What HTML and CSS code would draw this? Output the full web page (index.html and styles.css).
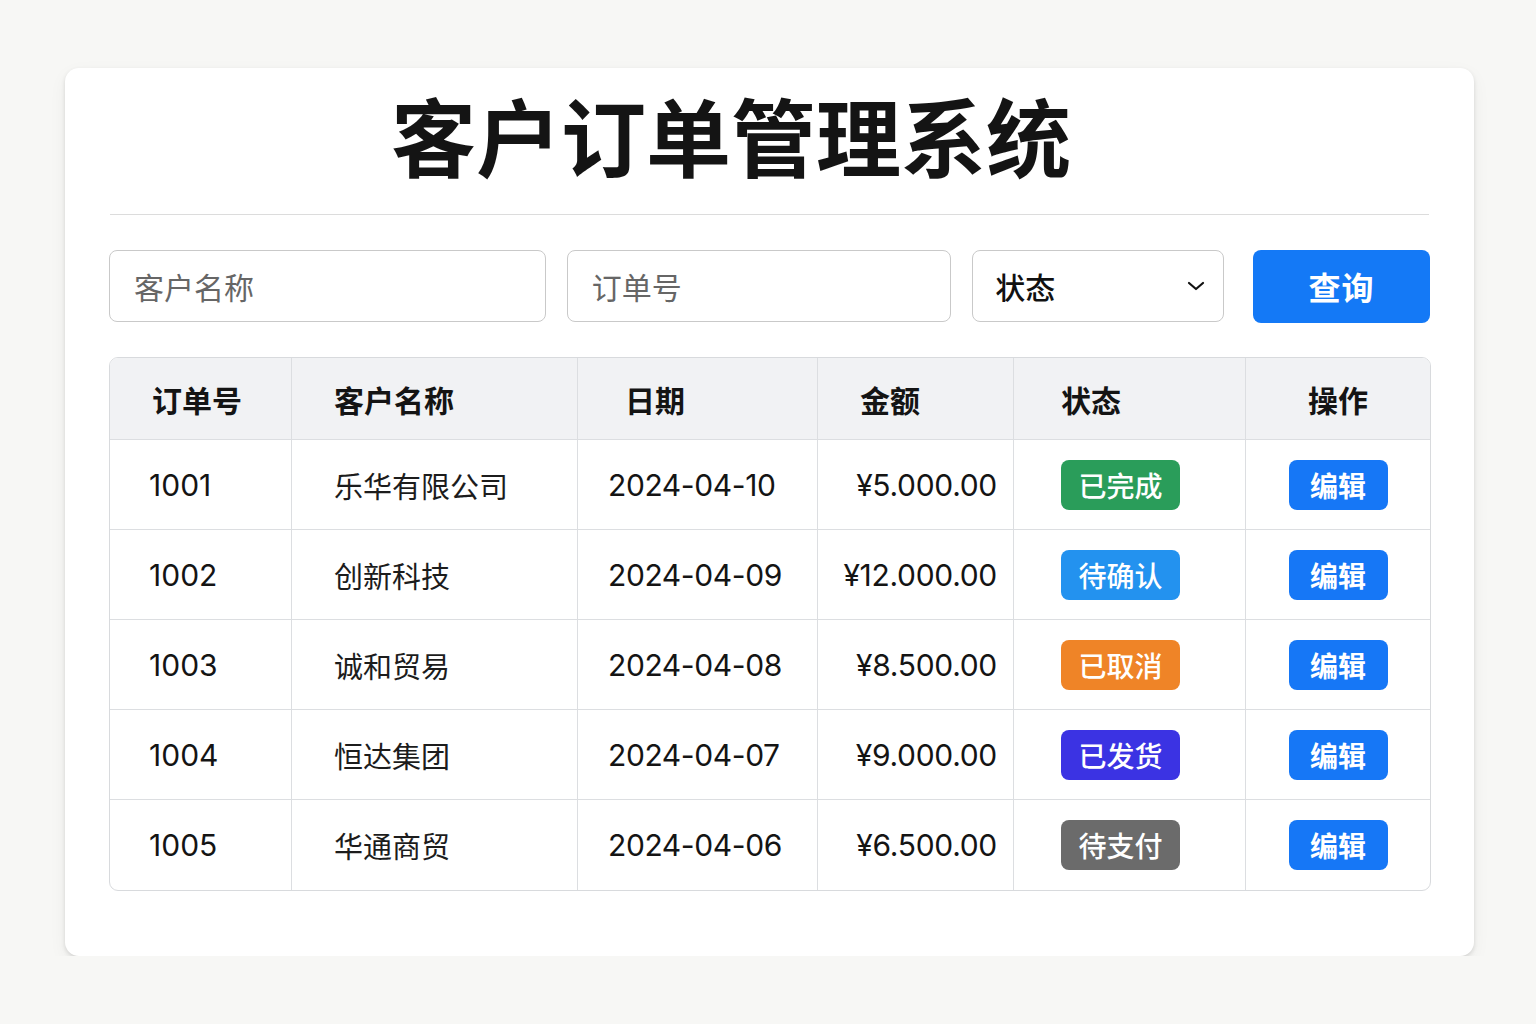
FILE: index.html
```html
<!DOCTYPE html>
<html lang="zh-CN">
<head>
<meta charset="utf-8">
<title>客户订单管理系统</title>
<link rel="stylesheet" href="styles.css">
</head>
<body>
<div class="card">
  <h1 class="title">客户订单管理系统</h1>
  <div class="divider"></div>
  <div class="filters">
    <div class="field field-name">客户名称</div>
    <div class="field field-order">订单号</div>
    <div class="field field-select">
      <span>状态</span>
      <svg class="chev" width="18" height="12" viewBox="0 0 18 12"><path d="M2 3 L9 9 L16 3" fill="none" stroke="#111" stroke-width="2.2" stroke-linecap="round" stroke-linejoin="round"/></svg>
    </div>
    <button class="btn-query">查询</button>
  </div>
  <table class="orders">
    <colgroup>
      <col style="width:182px"><col style="width:286px"><col style="width:240px"><col style="width:196px"><col style="width:232px"><col style="width:184px">
    </colgroup>
    <thead>
      <tr>
        <th class="c1">订单号</th><th class="c2">客户名称</th><th class="c3">日期</th><th class="c4">金额</th><th class="c5">状态</th><th class="c6">操作</th>
      </tr>
    </thead>
    <tbody>
      <tr><td class="c1">1001</td><td class="c2">乐华有限公司</td><td class="c3">2024-04-10</td><td class="c4">¥5.000.00</td><td class="c5"><span class="badge green">已完成</span></td><td class="c6"><span class="edit">编辑</span></td></tr>
      <tr><td class="c1">1002</td><td class="c2">创新科技</td><td class="c3">2024-04-09</td><td class="c4">¥12.000.00</td><td class="c5"><span class="badge blue">待确认</span></td><td class="c6"><span class="edit">编辑</span></td></tr>
      <tr><td class="c1">1003</td><td class="c2">诚和贸易</td><td class="c3">2024-04-08</td><td class="c4">¥8.500.00</td><td class="c5"><span class="badge orange">已取消</span></td><td class="c6"><span class="edit">编辑</span></td></tr>
      <tr><td class="c1">1004</td><td class="c2">恒达集团</td><td class="c3">2024-04-07</td><td class="c4">¥9.000.00</td><td class="c5"><span class="badge indigo">已发货</span></td><td class="c6"><span class="edit">编辑</span></td></tr>
      <tr><td class="c1">1005</td><td class="c2">华通商贸</td><td class="c3">2024-04-06</td><td class="c4">¥6.500.00</td><td class="c5"><span class="badge gray">待支付</span></td><td class="c6"><span class="edit">编辑</span></td></tr>
    </tbody>
  </table>
</div>
</body>
</html>
```
FILE: styles.css
```css
* { box-sizing: border-box; }
html, body { margin: 0; padding: 0; }
body {
  background: #f7f7f5;
  font-family: "Inter", "Noto Sans CJK SC", sans-serif;
  color: #111;
  padding-top: 68px;
}
.card {
  width: 1409px;
  margin-left: 65px;
  background: #fff;
  border-radius: 14px;
  box-shadow: 0 2px 4px rgba(0,0,0,0.12), 0 6px 18px rgba(0,0,0,0.05);
  padding: 15px 44px 65px 44px;
}
.title {
  margin: 0;
  font-family: "Noto Sans CJK SC", sans-serif;
  font-size: 85px;
  font-weight: 700;
  line-height: 102px;
  text-align: center;
  padding-right: 77px;
  color: #141414;
}
.divider {
  height: 1px;
  background: #dcdcdc;
  margin: 29px 1px 0 1px;
}
.filters {
  display: flex;
  align-items: center;
  margin-top: 35px;
  height: 72px;
}
.field {
  height: 72px;
  border: 1px solid #c9c9c9;
  border-radius: 8px;
  display: flex;
  align-items: center;
  padding-left: 24px;
  font-family: "Noto Sans CJK SC", sans-serif;
  font-size: 30px;
  color: #666;
}
.field-name { width: 437px; }
.field-order { width: 385px; margin-left: 21px; }
.field-select {
  width: 252px;
  margin-left: 21px;
  color: #111;
  font-weight: 500;
  padding-left: 22px;
  padding-right: 18px;
  justify-content: space-between;
}
.chev { display: block; }
.btn-query {
  width: 177px;
  height: 73px;
  margin-left: 29px;
  border: none;
  border-radius: 8px;
  background: #1479f6;
  color: #fff;
  font-family: "Noto Sans CJK SC", sans-serif;
  font-size: 32px;
  font-weight: 700;
  letter-spacing: 1px;
}
.orders {
  margin-top: 35px;
  width: 1321px;
  table-layout: fixed;
  border-collapse: separate;
  border-spacing: 0;
  border: 1px solid #d8dadd;
  border-radius: 9px;
  overflow: hidden;
}
.orders th, .orders td {
  border-right: 1px solid #dcdee1;
  border-bottom: 1px solid #dcdee1;
  padding: 0;
  white-space: nowrap;
}
.orders th:last-child, .orders td:last-child { border-right: none; }
.orders tbody tr:last-child td { border-bottom: none; }
.orders th {
  height: 82px;
  background: #f1f2f4;
  font-family: "Noto Sans CJK SC", sans-serif;
  font-size: 30px;
  font-weight: 700;
  text-align: left;
  color: #141414;
}
.orders td {
  height: 90px;
  font-size: 30px;
  color: #141414;
}
.orders td.c2 { font-family: "Noto Sans CJK SC", sans-serif; font-size: 29px; color: #1c1c1c; }
.orders th.c1 { padding-left: 42px; }
.orders td.c1 { padding-left: 39px; }
.orders .c2 { padding-left: 42px; }
.orders th.c3 { padding-left: 47px; }
.orders td.c3 { padding-left: 30px; letter-spacing: -0.4px; }
.orders th.c4 { padding-left: 42px; }
.orders td.c4 { text-align: right; padding-right: 16px; letter-spacing: -0.3px; }
.orders .c5 { padding-left: 47px; }
.orders th.c6, .orders td.c6 { text-align: center; }
.badge, .edit {
  display: inline-flex;
  align-items: center;
  justify-content: center;
  height: 50px;
  border-radius: 8px;
  color: #fff;
  font-family: "Noto Sans CJK SC", sans-serif;
  font-size: 28px;
  vertical-align: middle;
}
.badge { width: 119px; font-weight: 500; }
.edit { width: 99px; background: #1677f6; font-weight: 700; }
.green { background: #2a9d5a; }
.blue { background: #2392ef; }
.orange { background: #ef8427; }
.indigo { background: #3b33e3; }
.gray { background: #6b6b6b; }
```
